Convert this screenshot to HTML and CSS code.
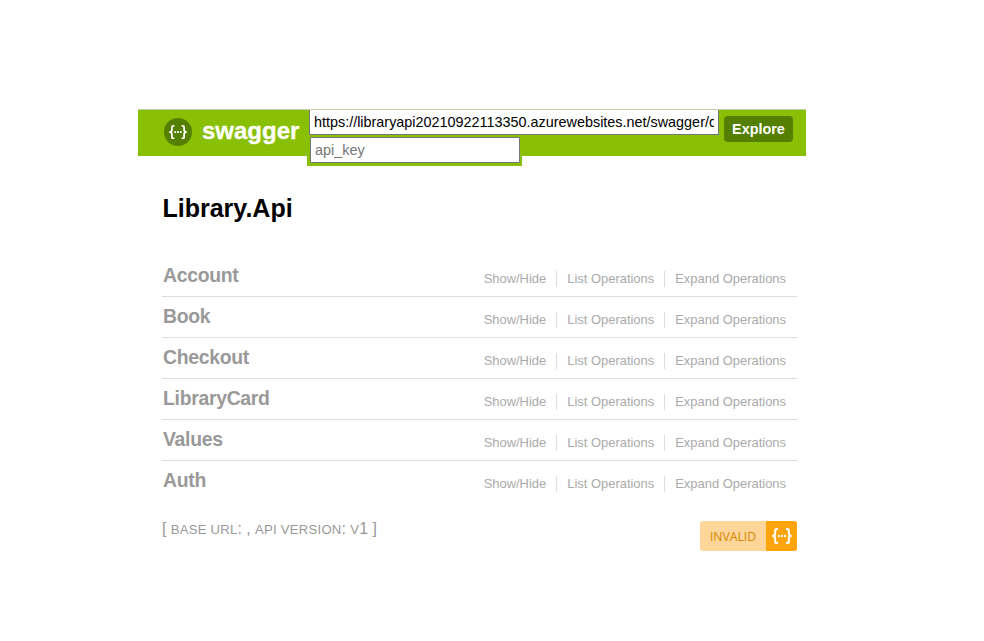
FILE: index.html
```html
<!DOCTYPE html>
<html lang="en">
<head>
<meta charset="utf-8">
<title>Swagger UI</title>
<link rel="stylesheet" href="styles.css">
</head>
<body>
<svg class="defs" width="0" height="0" aria-hidden="true">
  <symbol id="braces" viewBox="0 0 20 16">
    <path d="M6 1H4.8Q3.2 1 3.2 2.6V5.6Q3.2 8 .3 8Q3.2 8 3.2 10.4V13.4Q3.2 15 4.8 15H6M14 1H15.2Q16.8 1 16.8 2.6V5.6Q16.8 8 19.7 8Q16.8 8 16.8 10.4V13.4Q16.8 15 15.2 15H14" fill="none" stroke="#fff" stroke-width="2"/>
    <path d="M5.9 7h2v2h-2zM9 7h2v2H9zM12.1 7h2v2h-2z" fill="#fff"/>
  </symbol>
</svg>
<header class="header">
  <a class="logo"><span class="mark"><svg class="mark-icon"><use href="#braces"/></svg></span><span class="brand">swagger</span></a>
  <form class="selector">
    <input class="url" type="text" value="https://libraryapi20210922113350.azurewebsites.net/swagger/docs/v1">
    <div class="key-wrap"><input class="key" type="text" placeholder="api_key"></div>
  </form>
  <a class="explore">Explore</a>
</header>
<main class="content">
  <h1 class="title">Library.Api</h1>
  <ul class="resources">
    <li class="resource"><h2>Account</h2><div class="options"><a>Show/Hide</a><a>List Operations</a><a>Expand Operations</a></div></li>
    <li class="resource"><h2>Book</h2><div class="options"><a>Show/Hide</a><a>List Operations</a><a>Expand Operations</a></div></li>
    <li class="resource"><h2>Checkout</h2><div class="options"><a>Show/Hide</a><a>List Operations</a><a>Expand Operations</a></div></li>
    <li class="resource"><h2>LibraryCard</h2><div class="options"><a>Show/Hide</a><a>List Operations</a><a>Expand Operations</a></div></li>
    <li class="resource"><h2>Values</h2><div class="options"><a>Show/Hide</a><a>List Operations</a><a>Expand Operations</a></div></li>
    <li class="resource"><h2>Auth</h2><div class="options"><a>Show/Hide</a><a>List Operations</a><a>Expand Operations</a></div></li>
  </ul>
  <footer class="footer">
    <p class="meta">[ <span class="caps">base url</span>: , <span class="caps">api version</span>: <span class="caps">v</span>1 ]</p>
    <div class="badge"><span class="badge-text">INVALID</span><span class="badge-icon"><svg class="badge-braces"><use href="#braces"/></svg></span></div>
  </footer>
</main>
</body>
</html>
```

FILE: styles.css
```css
* { box-sizing: border-box; }
body {
  margin: 0;
  padding-top: 109px;
  background: #fff;
  font-family: "Liberation Sans", Arial, sans-serif;
}
.defs { display: block; }
.header {
  display: flex;
  align-items: flex-start;
  width: 668px;
  height: 47px;
  margin-left: 138.4px;
  background: #89bf04;
  border-top: 1px solid #c4cfa8;
}
.logo {
  display: flex;
  align-items: center;
  width: 168.6px;
  padding: 8px 0 0 25.6px;
}
.mark {
  display: flex;
  align-items: center;
  justify-content: center;
  width: 28px;
  height: 28px;
  border-radius: 50%;
  background: #547f00;
}
.mark-icon { width: 18px; height: 14.4px; }
.brand {
  margin: -3px 0 0 10px;
  color: #fff;
  font-size: 24px;
  line-height: 28px;
  font-weight: bold;
  -webkit-text-stroke: .3px #fff;
}
.selector { width: 412px; margin: 0; }
.url, .key {
  display: block;
  height: 26px;
  margin: 0;
  border: 1px solid #767676;
  border-radius: 0;
  background: #fff;
  color: #000;
  font-family: "Liberation Sans", Arial, sans-serif;
  outline: 0;
}
.url {
  width: 410px;
  height: 25px;
  margin-left: 2px;
  padding: 0 4px;
  border-top: 0;
  font-size: 14.4px;
}
.key-wrap {
  width: 215px;
  height: 31px;
  padding: 2px 2px 3px 3px;
  background: #89bf04;
}
.key { width: 210px; padding: 0 4px; border-radius: 1px; font-size: 14.4px; }
.key::placeholder { color: #757575; opacity: 1; }
.explore {
  width: 69px;
  height: 26px;
  margin: 6px 0 0 5px;
  border-radius: 4px;
  background: #547f00;
  color: #fff;
  font-size: 14.4px;
  line-height: 26px;
  font-weight: bold;
  text-align: center;
}
.content { width: 635px; margin-left: 162px; }
.title {
  margin: 0;
  padding: 37px 0 0 .5px;
  color: #000;
  font-size: 25px;
  line-height: 30px;
  font-weight: bold;
}
.resources { margin: 33px 0 0; padding: 0; list-style: none; }
.resource {
  display: flex;
  justify-content: space-between;
  height: 41px;
  border-bottom: 1px solid #ddd;
}
.resource:last-child { border-bottom-color: transparent; }
.resource h2 {
  margin: 0;
  padding: 7px 0 0 1px;
  color: #999;
  font-size: 19.4px;
  line-height: 24px;
  font-weight: bold;
  letter-spacing: -.3px;
}
.options { display: flex; padding: 15px 1px 0 0; }
.options a {
  height: 16px;
  padding: 0 10px;
  border-right: 1px solid #ddd;
  color: #aaa;
  font-size: 12.95px;
  line-height: 15px;
}
.options a:last-child { border-right: 0; }
.footer { display: flex; justify-content: space-between; margin-top: 19px; }
.meta { margin: 0; color: #999; font-size: 15.8px; line-height: 16px; }
.caps { font-size: 13.1px; text-transform: uppercase; letter-spacing: .25px; }
.badge {
  display: flex;
  width: 97px;
  height: 30px;
  overflow: hidden;
  border-radius: 3px;
  background: #ffd699;
}
.badge-text {
  width: 66px;
  color: #d48500;
  font-family: "Open Sans", sans-serif;
  font-size: 12.2px;
  line-height: 31px;
  text-align: center;
}
.badge-icon {
  display: flex;
  align-items: center;
  justify-content: center;
  width: 31px;
  background: #ffa50a;
}
.badge-braces { width: 20px; height: 16px; }
```
